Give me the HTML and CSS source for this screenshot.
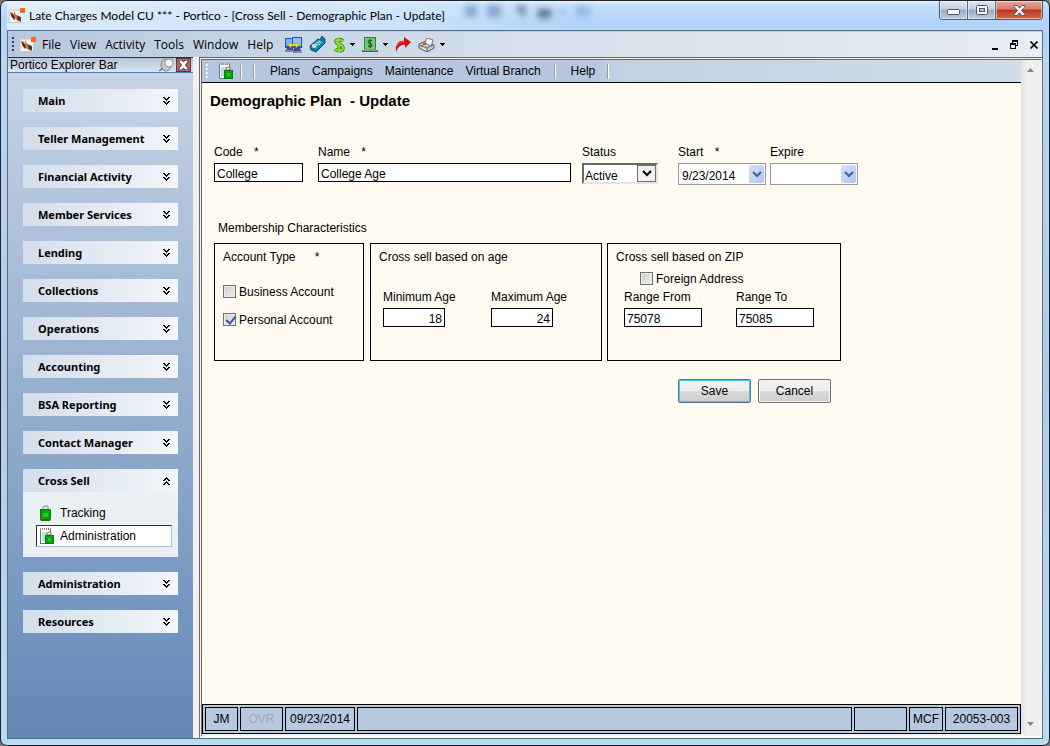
FILE: index.html
```html
<!DOCTYPE html>
<html lang="en">
<head>
<meta charset="utf-8">
<title>Portico - Demographic Plan - Update</title>
<link rel="stylesheet" href="styles.css">
</head>
<body>
<svg class="defs" aria-hidden="true">
  <symbol id="logo" viewBox="0 0 18 16">
    <rect x="1" y="2" width="13" height="13" fill="#f6f3f1"/>
    <path d="M1 2h13M1 2v13M1 14.5h13" stroke="#c9c4c4" fill="none"/>
    <path d="M2 4l3 1 2 5-1 2-3-4z" fill="#6e625c"/><path d="M8 7l5 2v5l-4-2z" fill="#4b4644"/>
    <path d="M6 3l2 4 1 1 1 6-3-4-1-1z" fill="#e8682a"/><path d="M3 5l3 3 1 4-3-3zM9 9l3 1v3z" fill="#3a2a24"/>
    <rect x="12" y="0" width="5" height="5" fill="#fb6b15"/>
  </symbol>
  <symbol id="down" viewBox="0 0 7 8"><path d="M0 0h2v1h1v1h1v-1h1v-1h2v1h-1v1h-1v1h-1v1h-1v-1h-1v-1h-1v-1h-1zM0 4h2v1h1v1h1v-1h1v-1h2v1h-1v1h-1v1h-1v1h-1v-1h-1v-1h-1v-1h-1z"/></symbol>
  <symbol id="bag" viewBox="0 0 16 16">
    <path d="M4 5V2l2-1h3v4z" fill="#e4e6e4" stroke="#8c8f8c"/>
    <path d="M1 4h10l1 1v9l-1 2H2l-1-2z" fill="#087c08"/><rect x="2" y="5" width="9" height="9" fill="#06a50b"/><rect x="4" y="8" width="5" height="4" fill="#24ca28"/>
  </symbol>
  <symbol id="listbag" viewBox="0 0 16 16">
    <path d="M1 2h11v13H1z" fill="#fff"/><path d="M1.500 15V1M11.500 1v4M1 15.500h5" stroke="#507e89"/><path d="M1 1h11" stroke="#a88f55" stroke-width="2" stroke-dasharray="1 1"/>
    <path d="M3 4h6v9H3z" fill="#bcdce8"/>
    <path d="M8 7V5l2-1h2v3z" fill="#eee" stroke="#777"/><path d="M6 7h9v9H6z" fill="#087c08"/><path d="M7 8h7v7H7z" fill="#06a50b"/><path d="M9 10h3v3H9z" fill="#24ca28"/>
  </symbol>
  <symbol id="tri" viewBox="0 0 5 3"><path d="M0 0h5v1h-1v1h-1v1h-1v-1h-1v-1h-1z"/></symbol>
  <symbol id="vee" viewBox="0 0 10 7"><path d="M1 1l4 4 4-4" fill="none" stroke="currentColor" stroke-width="2"/></symbol>
</svg>
<div class="window">
  <header class="titlebar">
    <svg class="logo" aria-hidden="true"><use href="#logo"/></svg>
    <span class="caption">Late Charges Model CU *** - Portico - [Cross Sell - Demographic Plan - Update]</span>
    <svg class="glass" viewBox="0 0 140 20" aria-hidden="true"><g fill="#5b83b4" opacity=".6"><rect x="6" y="4" width="12" height="12"/><rect x="28" y="4" width="14" height="12"/></g><g fill="#35516f" opacity=".75"><path d="M58 5h8v10h-4v-5h-4zM79 8h13v9H79z"/></g><g fill="#6797c7" opacity=".5"><path d="M100 10h8v3h-8zM117 5h14v10h-14z"/></g></svg>
    <div class="caption-buttons">
      <button class="cap" aria-label="Minimize"><svg viewBox="0 0 13 6" width="13" height="6"><rect x=".5" y=".5" width="12" height="5" rx="1" fill="#fff" stroke="#4b5668"/></svg></button>
      <button class="cap" aria-label="Maximize"><svg viewBox="0 0 12 10" width="12" height="10"><rect x=".5" y=".5" width="11" height="9" rx="1" fill="#fff" stroke="#4b5668"/><rect x="3.500" y="3.500" width="5" height="3" fill="#a9c0db" stroke="#4b5668"/></svg></button>
      <button class="cap close" aria-label="Close"><svg viewBox="0 0 13 11" width="13" height="11"><path d="M1 .5h3l2.500 2.700L9 .5h3v1L8.500 5.500 12 9.500v1H9L6.500 7.800 4 10.500H1v-1l3.500-4L1 1.500z" fill="#fff" stroke="#555967"/></svg></button>
    </div>
  </header>
  <div class="client">
    <nav class="menubar" aria-label="Application menu">
      <i class="grip dark"></i>
      <svg class="logo" aria-hidden="true"><use href="#logo"/></svg>
      <div class="menus"><button>File</button><button>View</button><button>Activity</button><button>Tools</button><button>Window</button><button>Help</button></div>
      <div class="tools">
        <button aria-label="Transfer"><svg viewBox="0 0 17 16" width="17" height="16"><path d="M0 1h9v10H0z" fill="#2c55ac"/><path d="M1 2h7v7H1z" fill="#79b4f5"/><path d="M7 0h10v11H7z" fill="#2c55ac"/><path d="M8 1h8v8H8z" fill="#8fc2fa"/><path d="M2 11h6v2H1zM9 11h6l1 3H8z" fill="#444b94"/><path d="M0 13h8v2H0zM8 14h9v2H8z" fill="#8280bd"/><path d="M3 8l3-3v2h5V5l3 3-3 3V9H6v2z" fill="#f6df18" stroke="#a38b32" stroke-width=".5"/></svg></button>
        <button aria-label="Calculator"><svg viewBox="0 0 17 17" width="17" height="17"><path d="M1 10L9 3l2 1 2-4 3 3v4L7 16l-5-2z" fill="#0c7da3" stroke="#124e66"/><path d="M3 9l7-5 4 2-8 7z" fill="#45b9d8"/><path d="M8 6l1 1M10 5l1 1M7 8l1 1M10 8l1 1" stroke="#d7ffff"/><circle cx="5" cy="10" r="2" fill="#e9dcf2"/></svg></button>
        <button class="with-arrow" aria-label="Payments"><svg viewBox="0 0 12 16" width="12" height="16"><path d="M10 4C8 2 2 2 3 5s7 2 7 6-6 3-8 1M5 1l2 14" fill="none" stroke="#377d12" stroke-width="3.500"/><path d="M10 4C8 2 2 2 3 5s7 2 7 6-6 3-8 1M5 1l2 14" fill="none" stroke="#8ee42d" stroke-width="1.800"/></svg><svg class="tri"><use href="#tri"/></svg></button>
        <button class="with-arrow" aria-label="Cash"><svg viewBox="0 0 16 16" width="16" height="16"><path d="M2 0h12v13H2z" fill="#347d3f"/><path d="M3 1h10v11H3z" fill="#6fc877"/><path d="M10 4C8 3 6 3 6 5s4 1 4 3-3 2-4 1M8 2v9" fill="none" stroke="#143f1b"/><path d="M0 13h16v2H0z" fill="#566056"/><path d="M1 13h14" stroke="#bdd7be"/></svg><svg class="tri"><use href="#tri"/></svg></button>
        <button aria-label="Forward"><svg viewBox="0 0 16 15" width="16" height="15"><path d="M9 0l7 5-6 6V8C6 7 3 10 1 15 0 7 4 3 9 4z" fill="#d60b12"/><path d="M2 9c2-4 5-5 8-4" fill="none" stroke="#f05c5e"/></svg></button>
        <button class="with-arrow" aria-label="Print"><svg viewBox="0 0 17 14" width="17" height="14"><path d="M1 6l7-3 8 4v3l-7 4-8-4z" fill="#c9c9cc" stroke="#555"/><path d="M7 5l2-5 6 2-2 6z" fill="#fff" stroke="#777"/><path d="M2 7l7 3 6-3M9 10v3" fill="none" stroke="#69696d"/><path d="M3 8h2" stroke="#3a3" stroke-width="2"/><path d="M5 6h3" stroke="#e33" stroke-width="2"/><path d="M4 10l4 2" stroke="#fff"/></svg><svg class="tri"><use href="#tri"/></svg></button>
      </div>
      <div class="child-buttons">
        <button aria-label="Minimize child"><svg viewBox="0 0 6 10" width="6" height="10"><path d="M0 8h6v2H0z"/></svg></button>
        <button aria-label="Restore child"><svg viewBox="0 0 8 9" width="8" height="9"><path d="M2 0h6v6H6V5h1V2H3v1H2zM0 3h6v6H0zM1 5v3h4V5z" fill-rule="evenodd"/></svg></button>
        <button aria-label="Close child"><svg viewBox="0 0 8 8" width="8" height="8"><path d="M.5.5l7 7M7.500.5l-7 7" stroke="#000" stroke-width="1.600"/></svg></button>
      </div>
    </nav>
    <div class="workspace">
      <aside class="sidebar">
        <div class="side-title"><span>Portico Explorer Bar</span>
          <button aria-label="Pin"><svg viewBox="0 0 16 14" width="16" height="14"><ellipse cx="8" cy="7" rx="5" ry="6" fill="#c4c6cb" stroke="#85888f"/><ellipse cx="11" cy="5" rx="4" ry="4" fill="#f5f5f5" stroke="#999"/><path d="M5 10l-4 3" stroke="#777" stroke-width="1.500"/></svg></button>
          <button class="side-close" aria-label="Close explorer bar"><svg viewBox="0 0 11 10" width="11" height="10"><path d="M1 0h3l1.500 2L7 0h3v2L7.500 5 10 8v2H7L5.500 8 4 10H1V8l2.500-3L1 2z" fill="#fff" stroke="#302a30"/></svg></button>
        </div>
        <nav class="groups" aria-label="Explorer">
          <button class="group">Main<svg><use href="#down"/></svg></button>
          <button class="group">Teller Management<svg><use href="#down"/></svg></button>
          <button class="group">Financial Activity<svg><use href="#down"/></svg></button>
          <button class="group">Member Services<svg><use href="#down"/></svg></button>
          <button class="group">Lending<svg><use href="#down"/></svg></button>
          <button class="group">Collections<svg><use href="#down"/></svg></button>
          <button class="group">Operations<svg><use href="#down"/></svg></button>
          <button class="group">Accounting<svg><use href="#down"/></svg></button>
          <button class="group">BSA Reporting<svg><use href="#down"/></svg></button>
          <button class="group">Contact Manager<svg><use href="#down"/></svg></button>
          <div class="expanded">
            <button class="group" aria-expanded="true">Cross Sell<svg class="up"><use href="#down"/></svg></button>
            <div class="links">
              <a href="#tracking"><svg width="16" height="16"><use href="#bag"/></svg>Tracking</a>
              <a class="current" href="#administration"><svg width="16" height="16"><use href="#listbag"/></svg>Administration</a>
            </div>
          </div>
          <button class="group">Administration<svg><use href="#down"/></svg></button>
          <button class="group">Resources<svg><use href="#down"/></svg></button>
        </nav>
      </aside>
      <div class="child">
        <main class="page">
          <nav class="toolbar" aria-label="Cross Sell">
            <i class="grip"></i>
            <svg class="tool-icon" width="16" height="16" aria-hidden="true"><use href="#listbag"/></svg>
            <i class="sep"></i><i class="sep"></i>
            <div class="toolbar-menus"><button>Plans</button><button>Campaigns</button><button>Maintenance</button><button>Virtual Branch</button></div>
            <i class="sep"></i><button class="help">Help</button><i class="sep"></i>
          </nav>
          <form class="form">
            <h1>Demographic Plan &nbsp;- Update</h1>
            <div class="fields">
              <div class="field code"><label for="code">Code <b>*</b></label><input id="code" type="text" value="College"></div>
              <div class="field name"><label for="name">Name <b>*</b></label><input id="name" type="text" value="College Age"></div>
              <div class="field status"><label for="status">Status</label><div class="combo"><select id="status"><option>Active</option><option>Inactive</option></select><span class="arrow"><svg><use href="#vee"/></svg></span></div></div>
              <div class="field date"><label for="start">Start <b>*</b></label><div class="picker"><input id="start" type="text" value="9/23/2014"><button type="button" aria-label="Choose start date"><svg><use href="#vee"/></svg></button></div></div>
              <div class="field date"><label for="expire">Expire</label><div class="picker"><input id="expire" type="text"><button type="button" aria-label="Choose expiry date"><svg><use href="#vee"/></svg></button></div></div>
            </div>
            <h2>Membership Characteristics</h2>
            <div class="panels">
              <fieldset class="panel account" aria-label="Account Type">
                <h3>Account Type <b>*</b></h3>
                <label class="check"><input type="checkbox">Business Account</label>
                <label class="check"><input type="checkbox" checked>Personal Account</label>
              </fieldset>
              <fieldset class="panel age" aria-label="Cross sell based on age">
                <h3>Cross sell based on age</h3>
                <div class="pair">
                  <div class="field"><label for="min">Minimum Age</label><input id="min" type="text" value="18"></div>
                  <div class="field"><label for="max">Maximum Age</label><input id="max" type="text" value="24"></div>
                </div>
              </fieldset>
              <fieldset class="panel zip" aria-label="Cross sell based on ZIP">
                <h3>Cross sell based on ZIP</h3>
                <label class="check"><input type="checkbox">Foreign Address</label>
                <div class="pair">
                  <div class="field"><label for="from">Range From</label><input id="from" type="text" value="75078"></div>
                  <div class="field"><label for="to">Range To</label><input id="to" type="text" value="75085"></div>
                </div>
              </fieldset>
            </div>
            <div class="actions"><button type="submit" class="default">Save</button><button type="button">Cancel</button></div>
          </form>
          <footer class="statusbar"><span class="s-user">JM</span><span class="s-ovr">OVR</span><span class="s-date">09/23/2014</span><span class="s-fill"></span><span class="s-blank"></span><span class="s-code">MCF</span><span class="s-id">20053-003</span></footer>
        </main>
        <div class="scroll"><svg viewBox="0 0 7 4" width="7" height="4"><path d="M0 4l3.500-4L7 4z" fill="#858585"/></svg><svg viewBox="0 0 7 4" width="7" height="4"><path d="M0 0l3.500 4L7 0z" fill="#858585"/></svg></div>
      </div>
    </div>
  </div>
</div>
</body>
</html>
```

FILE: styles.css
```css
* { box-sizing: border-box; }
body { margin: 0; background: #777; color: #000; font: 12px/18px "Liberation Sans", Arial, sans-serif; }
button, input, select { font: inherit; color: inherit; margin: 0; }
button { border: 0; background: none; padding: 0; }
svg { flex: none; display: block; }
.defs { position: absolute; width: 0; height: 0; }

.window {
  min-height: 100vh; display: flex; flex-direction: column; padding: 0 6px 6px;
  border: 1px solid #22242b; border-radius: 7px;
  background: linear-gradient(#e6f2fd 0, #c5def9 4px, #b0d4fa 20px, #b9d6f6 60px, #b2c9e8 50%, #b9dcf5 100%);
}
.titlebar { display: flex; height: 29px; align-items: center; padding-left: 1px; font: 12px/16px Lato, sans-serif;
  background: linear-gradient(90deg, rgba(232, 242, 252, .75), rgba(218, 234, 251, .6) 40%, transparent 55%); }
.logo { width: 18px; height: 16px; }
.caption { margin-left: 3px; white-space: nowrap; }
.glass { width: 140px; height: 20px; margin-left: 14px; align-self: flex-start; filter: blur(3px); }
.caption-buttons { margin: 0 0 0 auto; display: flex; align-self: flex-start; height: 19px; border: 1px solid #4e5d6e; border-top: 0; border-radius: 0 0 4px 4px; overflow: hidden; }
.cap { display: grid; place-items: center; width: 28px; border-right: 1px solid #59697b; background: linear-gradient(#dce7f2, #c2d1e2 45%, #98acc4 50%, #b9cce0); box-shadow: inset 0 0 0 1px rgba(255, 255, 255, .5); }
.cap:first-child svg { margin-top: 4px; }
.cap.close { width: 46px; border: 0; background: linear-gradient(#e8a99b, #d67b69 45%, #bb341c 50%, #d46a4a); }

.client { flex: 1; display: flex; flex-direction: column; border: 1px solid #5d6a78; background: #f0f0f0; }
.menubar { display: flex; align-items: center; height: 26px; padding: 0 4px 0 2px; border-top: 1px solid #b4d0ef; background: linear-gradient(90deg, #b7c8de, #d5e0ea 50%, #e9edf4); font: 12px/16px "Open Sans", sans-serif; }
.grip { width: 2px; height: 15px; margin: 0 2px; background: repeating-linear-gradient(#edf4fb 0 2px, transparent 2px 4px); }
.grip.dark { background: repeating-linear-gradient(#273e6b 0 2px, transparent 2px 4px); margin-right: 5px; }
.menus { display: flex; gap: 9px; margin-left: 5px; }
.tools { display: flex; align-items: center; gap: 7px; margin-left: 12px; }
.with-arrow { display: flex; align-items: center; gap: 5px; }
.tri { width: 5px; height: 3px; }
.child-buttons { display: flex; gap: 12px; margin-left: auto; }

.workspace { flex: 1; display: flex; }
.sidebar { width: 185px; flex: none; background: linear-gradient(#c8d5e6, #6288b7); }
.side-title { display: flex; align-items: center; gap: 2px; height: 16px; padding: 0 2px; border-bottom: 1px solid #4d7db5; background: linear-gradient(#b5c6dc, #dbe4ee); border-top: 1px solid #333; }
.side-title span { flex: 1; line-height: 14px; white-space: nowrap; }
.side-close { display: grid; place-items: center; width: 15px; height: 14px; background: #b06b6b; border: 1px solid #652f38; }
.groups { display: flex; flex-direction: column; gap: 15px; padding: 16px 15px; }
.group { display: flex; align-items: center; justify-content: space-between; width: 100%; height: 23px; padding: 0 8px 0 15px; background: linear-gradient(90deg, #d3deeb, #f3f6fa); font: bold 11px/16px "Noto Sans", sans-serif; text-align: left; }
.group svg { width: 7px; height: 8px; }
.group .up { transform: rotate(180deg); }
.expanded { background: #ebf0f4; }
.links { padding: 10px 6px 10px 13px; display: grid; gap: 1px; }
.links a { display: flex; align-items: center; height: 22px; padding: 0 2px; gap: 5px; border: 1px solid transparent; color: #000; text-decoration: none; }
.links .current { background: #fff; border-color: #22304e #a9bfda #a9bfda #22304e; }

.child { flex: 1; min-width: 0; display: flex; margin-left: 6px; padding: 0 2px 2px 0; border: 3px double #696969; border-right: 1px solid #fff; border-bottom: 2px solid #fff; }
.page { flex: 1; min-width: 0; display: flex; flex-direction: column; background: #fffbf0; }
.toolbar { display: flex; align-items: center; height: 23px; border-bottom: 1px solid #000; background: linear-gradient(90deg, #b5c6de 48%, #c2d1e2 50%, #d1dde9); padding-left: 2px; }
.tool-icon { margin: 0 6px 0 8px; }
.sep { width: 2px; height: 15px; background: #fff; border-left: 1px solid #999; }
.sep + .sep { margin-left: 11px; }
.toolbar-menus { display: flex; gap: 12px; margin: 0 13px 0 15px; white-space: nowrap; }
.help { margin: 0 12px 0 15px; }

.form { flex: 1; padding: 8px; }
h1 { margin: 0; font-size: 15px; line-height: 20px; }
h2, h3 { margin: 0; font-size: 12px; line-height: 18px; font-weight: normal; }
label b, h3 b { font-weight: normal; margin-left: 8px; }
.fields { display: flex; margin: 32px 0 0 4px; }
.field label { display: block; height: 20px; }
.field input { display: block; width: 100%; height: 19px; padding: 2px 2px 0; border: 1px solid #000; background: #fff; }
.code { width: 89px; margin-right: 15px; }
.name { width: 253px; margin-right: 11px; }
.status { width: 76px; margin-right: 20px; }
.date { width: 88px; margin-right: 4px; }
.combo { position: relative; height: 21px; border: 2px solid #696969; border-right-color: #e3e3e3; border-bottom-color: #e3e3e3; background: #fff; }
.combo select { appearance: none; width: 100%; height: 18px; padding: 2px 1px 0; border: 0; background: none; }
.arrow { position: absolute; top: 0; right: 0; width: 19px; height: 17px; display: grid; place-items: center; background: #f0f0f0; border: 1px solid #707070; pointer-events: none; }
.arrow svg, .picker svg { width: 10px; height: 7px; }
.picker { display: flex; height: 22px; padding: 1px; border: 1px solid #999; background: #fff; }
.picker input { flex: 1; min-width: 0; border: 0; }
.picker button { display: grid; place-items: center; width: 15px; border-radius: 2px; color: #4a6185; background: linear-gradient(135deg, #d4e1fc, #adc6f6); }
h2 { margin: 34px 0 6px 8px; }
.panels { display: flex; margin-left: 4px; }
.panel { min-width: 0; min-height: 118px; margin: 0; padding: 4px 8px; border: 1px solid #000; }
.account { width: 150px; margin-right: 6px; }
.age { width: 232px; margin-right: 5px; }
.zip { width: 234px; }
.account h3 { margin-bottom: 17px; }
.account h3 b { margin-left: 16px; }
.check { display: flex; align-items: center; gap: 3px; height: 18px; white-space: nowrap; }
.account .check { margin-bottom: 10px; }
.check input { appearance: none; width: 13px; height: 13px; flex: none; margin-bottom: 2px; border: 1px solid #707070; background: linear-gradient(135deg, #ccc, #eee); box-shadow: inset 0 0 0 1px #eee; }
.check input:checked::after { content: ""; display: block; width: 4px; height: 8px; margin: 0 0 0 4px; border: solid #4257a0; border-width: 0 2px 2px 0; transform: rotate(40deg); }
.age .pair { display: flex; gap: 46px; margin: 22px 0 0 4px; }
.age .field { width: 62px; white-space: nowrap; }
.age .field input { text-align: right; }
.zip .check { margin: 4px 0 0 24px; }
.zip .pair { display: flex; gap: 34px; margin-left: 8px; }
.zip .field { width: 78px; }
.actions { display: flex; gap: 7px; margin: 18px 0 0 468px; }
.actions button { width: 73px; height: 24px; border: 1px solid #707070; border-radius: 2px; background: linear-gradient(#f3f3f3, #ebebeb 50%, #dadada 52%, #cdcdcd); box-shadow: inset 0 0 0 1px #f6f6f6; }
.actions .default { border-color: #54748b; box-shadow: inset 0 0 0 1px #48c7ee; }

.statusbar { display: flex; gap: 2px; height: 30px; padding: 2px; border: 1px solid #000; background: #b7c9df; }
.statusbar span { display: grid; place-items: center; border: 1px solid #000; }
.s-user { width: 33px; }
.s-ovr { width: 43px; color: #a4a8ad; }
.s-date { width: 70px; }
.s-fill { flex: 1; }
.s-blank { width: 53px; }
.s-code { width: 34px; }
.s-id { width: 73px; }
.scroll { width: 18px; flex: none; display: flex; flex-direction: column; align-items: center; justify-content: space-between; padding: 8px 0; background: linear-gradient(90deg, #e3e3e3, #f1f1f1 40%, #eee); }
```
